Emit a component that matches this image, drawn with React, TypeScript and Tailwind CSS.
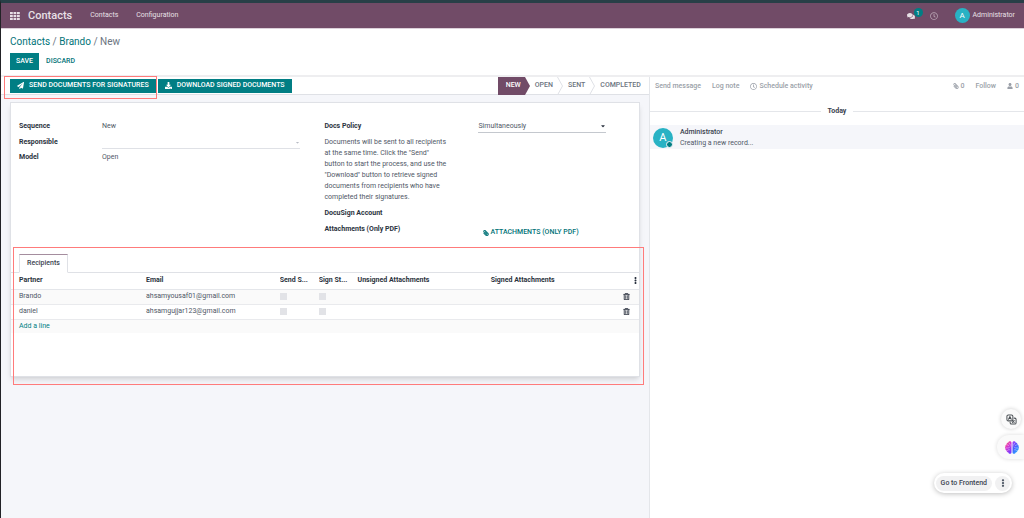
import { useState } from 'react'
import {
  FaCaretDown,
  FaComments,
  FaDownload,
  FaEllipsisV,
  FaPaperPlane,
  FaPaperclip,
  FaRegClock,
  FaRegTrashAlt,
  FaUser,
} from 'react-icons/fa'

interface Recipient {
  id: number
  partner: string
  email: string
}

const RECIPIENTS: Recipient[] = [
  { id: 1, partner: 'Brando', email: 'ahsamyousaf01@gmail.com' },
  { id: 2, partner: 'daniel', email: 'ahsamgujjar123@gmail.com' },
]

function AppsIcon() {
  return (
    <svg viewBox="0 0 10 8" className="h-2 w-[10px] fill-current" aria-hidden="true">
      {[0, 3, 6].map((y) =>
        [0, 3.5, 7].map((x) => <rect key={`${x}-${y}`} x={x} y={y} width="2.8" height="2.2" />),
      )}
    </svg>
  )
}

function TranslateIcon() {
  return (
    <svg viewBox="0 0 24 24" className="size-[11px]" fill="none" stroke="#4b5055" strokeWidth="2.2" strokeLinejoin="round" strokeLinecap="round" aria-hidden="true">
      <rect x="2" y="2" width="13" height="13" rx="3" />
      <path d="M5.5 11.5 8.5 5.5l3 6M6.6 9.8h3.8" />
      <path d="M18 9h1a3 3 0 0 1 3 3v7a3 3 0 0 1-3 3h-7a3 3 0 0 1-3-3v-1" />
      <path d="m14 18.500 4-4M14.500 14.500l3.500 4" />
    </svg>
  )
}

function BrainIcon() {
  return (
    <svg viewBox="0 0 28 26" className="h-[13px] w-[14px]" aria-hidden="true">
      <defs>
        <linearGradient id="brain-left" x1="0" y1="0" x2="0.6" y2="1">
          <stop offset="0" stopColor="#ff7a4c" />
          <stop offset="0.45" stopColor="#dc35cc" />
          <stop offset="1" stopColor="#7a3bff" />
        </linearGradient>
        <linearGradient id="brain-right" x1="0" y1="0" x2="0.6" y2="1">
          <stop offset="0" stopColor="#b03cf5" />
          <stop offset="0.5" stopColor="#4b5cff" />
          <stop offset="1" stopColor="#25a6ff" />
        </linearGradient>
      </defs>
      <path
        fill="url(#brain-left)"
        d="M13 3.500C13 1.500 11.500.5 10 .5 8.300.5 7 1.500 6.700 3 4.500 3 3 4.600 3.200 6.800 1.500 7.600.5 9.200.8 11 0 12 0 14 .8 15c-.3 1.800.7 3.400 2.400 4.200C3 21.400 4.500 23 6.700 23c.3 1.500 1.600 2.500 3.300 2.500 1.500 0 3-1 3-3z"
      />
      <path
        fill="url(#brain-right)"
        d="M15 3.500c0-2 1.500-3 3-3 1.700 0 3 1 3.300 2.500 2.200 0 3.700 1.600 3.500 3.800 1.700.8 2.700 2.400 2.400 4.200.8 1 .8 3 0 4 .3 1.800-.7 3.400-2.400 4.200.2 2.200-1.300 3.800-3.500 3.800-.3 1.500-1.600 2.500-3.300 2.500-1.500 0-3-1-3-3z"
      />
      <path
        fill="none"
        stroke="#fff"
        strokeWidth="0.8"
        strokeLinecap="round"
        d="M4 8c1.500-.5 3 0 3.500 1.500M9 5c0 1.500.8 2.500 2 3M2.500 14h5l2-2M5 19c1-1.500 2.500-2 4-1.500M24 8c-1.500-.5-3 0-3.500 1.500M19 5c0 1.500-.8 2.500-2 3M25.500 14h-5l-2-2M23 19c-1-1.500-2.500-2-4-1.500"
      />
    </svg>
  )
}

function Navbar() {
  return (
    <header className="flex h-[26px] items-center border-b border-[#dcd0d9] bg-[#714B67] px-[9px] text-[#e8e0e6]">
      <button type="button" aria-label="Apps">
        <AppsIcon />
      </button>
      <a href="#contacts" className="ml-2 text-[11px] font-medium">
        Contacts
      </a>
      <nav className="ml-[18px] flex gap-[18px]">
        <a href="#contacts">Contacts</a>
        <a href="#configuration">Configuration</a>
      </nav>
      <div className="ml-auto flex items-center">
        <button type="button" aria-label="Messages" className="relative mr-[15px]">
          <FaComments className="size-2" />
          <span className="absolute -top-1 left-[7px] flex h-[9px] w-[9px] items-center justify-center rounded-full bg-[#017e84] text-[6px] text-white">
            1
          </span>
        </button>
        <button type="button" aria-label="Activities" className="mr-[17px] opacity-60">
          <FaRegClock className="size-2" />
        </button>
        <button type="button" className="flex items-center gap-[3px]">
          <span className="flex size-[15px] items-center justify-center rounded-full bg-[#28b2c4] text-[8px] text-white">A</span>
          Administrator
        </button>
      </div>
    </header>
  )
}

function ControlPanel() {
  return (
    <div className="border-b-2 border-[#eeeef0] bg-white px-[9px] pt-[6px] pb-[5px]">
      <nav className="text-[10px] leading-[14px] text-[#6b7480]">
        <a href="#contacts" className="text-[#017378]">
          Contacts
        </a>
        {' / '}
        <a href="#brando" className="text-[#017378]">
          Brando
        </a>
        {' / New'}
      </nav>
      <div className="mt-1 flex font-medium">
        <button type="button" className="h-[17px] bg-[#017e84] px-[6px] text-white">
          SAVE
        </button>
        <button type="button" className="h-[17px] px-[7px] text-[#017378]">
          DISCARD
        </button>
      </div>
    </div>
  )
}

function StepArrow() {
  return (
    <svg viewBox="0 0 6 18" className="mr-[5px] ml-1 h-[18px] w-[6px]" fill="none" stroke="#dfe1e6" aria-hidden="true">
      <path d="m.5 0 5 9-5 9" />
    </svg>
  )
}

function StatusBar() {
  return (
    <div className="flex h-[18px] items-center border-b border-[#dfe1e6] bg-white pl-[9px] font-medium">
      <div className="relative">
        <button type="button" className="flex h-[14px] items-center gap-[5px] bg-[#017e84] px-[7px] text-white">
          <FaPaperPlane className="size-[7px]" />
          SEND DOCUMENTS FOR SIGNATURES
        </button>
        <div className="pointer-events-none absolute -top-[3px] -right-px -bottom-[6px] -left-[6px] z-10 border border-[#ff7b7b]" />
      </div>
      <button type="button" className="ml-[2px] flex h-[14px] items-center gap-[5px] bg-[#017e84] px-[7px] text-white">
        <FaDownload className="size-[7px]" />
        DOWNLOAD SIGNED DOCUMENTS
      </button>
      <div className="ml-auto flex h-[18px] items-center text-[#6b7480]">
        <span className="flex h-full items-center bg-[#714B67] pl-2 text-white">NEW</span>
        <svg viewBox="0 0 9 18" className="mr-[5px] h-[18px] w-[9px]" aria-hidden="true">
          <path d="M0 0h4l5 9-5 9H0z" fill="#714B67" />
        </svg>
        OPEN
        <StepArrow />
        SENT
        <StepArrow />
        <span className="pr-2">COMPLETED</span>
      </div>
    </div>
  )
}

function FormFields() {
  const [policy, setPolicy] = useState('Simultaneously')
  return (
    <div className="grid grid-cols-[305fr_306fr] px-2 pt-[15px]">
      <div className="grid auto-rows-min grid-cols-[83px_1fr] pr-6 leading-[11px]">
        <span className="mb-1 pt-[3px] font-bold text-[#2b3340]">Sequence</span>
        <span className="mb-1 pt-[3px]">New</span>
        <label htmlFor="responsible" className="mb-[3px] pt-[1px] font-bold text-[#2b3340]">
          Responsible
        </label>
        <div className="relative mb-[3px] border-b border-[#dfe1e6]">
          <input id="responsible" className="block h-3 w-full outline-none" />
          <FaCaretDown className="absolute top-[4px] right-0 size-[5px] text-[#b8bcc4]" />
        </div>
        <span className="font-bold text-[#2b3340]">Model</span>
        <span>Open</span>
      </div>
      <div className="grid auto-rows-min grid-cols-[126px_128px] gap-x-7 leading-[11px]">
        <label htmlFor="policy" className="pt-[3px] pb-1 font-bold text-[#2b3340]">
          Docs Policy
        </label>
        <div className="relative mb-1 border-b border-[#c4c8ce] pt-[2px]">
          <select
            id="policy"
            value={policy}
            onChange={(e) => setPolicy(e.target.value)}
            className="block h-3 w-full appearance-none outline-none"
          >
            <option>Simultaneously</option>
            <option>Sequentially</option>
          </select>
          <FaCaretDown className="pointer-events-none absolute top-[5px] right-0 size-[6px] text-[#2b3340]" />
        </div>
        <p className="col-start-1 whitespace-nowrap">
          Documents will be sent to all recipients
          <br />
          at the same time. Click the "Send"
          <br />
          button to start the process, and use the
          <br />
          "Download" button to retrieve signed
          <br />
          documents from recipients who have
          <br />
          completed their signatures.
        </p>
        <span className="col-start-1 mt-[5px] font-bold text-[#2b3340]">DocuSign Account</span>
        <span className="col-start-1 mt-[5px] font-bold whitespace-nowrap text-[#2b3340]">Attachments (Only PDF)</span>
        <button type="button" className="mt-2 flex items-center gap-px pl-[5px] font-medium whitespace-nowrap text-[#017378]">
          <FaPaperclip className="size-[6px] -scale-x-100" stroke="currentColor" strokeWidth="24" />
          ATTACHMENTS (ONLY PDF)
        </button>
      </div>
    </div>
  )
}

function RecipientsTable() {
  return (
    <table className="w-full table-fixed text-left">
      <colgroup>
        <col className="w-[21.500%]" />
        <col className="w-[21.300%]" />
        <col className="w-[6.200%]" />
        <col className="w-[6.200%]" />
        <col className="w-[21.200%]" />
        <col />
        <col className="w-[21px]" />
      </colgroup>
      <thead className="border-b border-[#e4e6ea] text-[#2b3340]">
        <tr className="h-4">
          <th className="pl-2">Partner</th>
          <th>Email</th>
          <th className="truncate">Send S...</th>
          <th className="truncate">Sign St...</th>
          <th>Unsigned Attachments</th>
          <th>Signed Attachments</th>
          <th>
            <button type="button" aria-label="Optional columns" className="flex w-full justify-end">
              <FaEllipsisV className="size-[7px]" />
            </button>
          </th>
        </tr>
      </thead>
      <tbody>
        {RECIPIENTS.map((r) => (
          <tr key={r.id} className="h-[15px] border-b border-[#e9eaed] odd:bg-[#fafafa]">
            <td className="pl-2">{r.partner}</td>
            <td>{r.email}</td>
            <td>
              <input type="checkbox" disabled aria-label="Send Status" className="block size-[7px] appearance-none bg-[#e2e3e7]" />
            </td>
            <td>
              <input type="checkbox" disabled aria-label="Sign Status" className="block size-[7px] appearance-none bg-[#e2e3e7]" />
            </td>
            <td />
            <td />
            <td>
              <button type="button" aria-label="Delete row" className="ml-[5px] block">
                <FaRegTrashAlt className="size-[7px] text-[#3b434f]" stroke="currentColor" strokeWidth="16" />
              </button>
            </td>
          </tr>
        ))}
        <tr className="h-[14px] bg-[#fafafa]">
          <td colSpan={7} className="pl-2">
            <a href="#add" className="text-[#017e84]">
              Add a line
            </a>
          </td>
        </tr>
      </tbody>
    </table>
  )
}

function Chatter() {
  return (
    <aside className="border-l border-[#e4e6ea] bg-white">
      <div className="flex h-[18px] items-center gap-[11px] px-[5px] font-medium text-[#9a9fa8]">
        <button type="button">Send message</button>
        <button type="button">Log note</button>
        <button type="button" className="flex items-center gap-[2px]">
          <FaRegClock className="size-[7px]" />
          Schedule activity
        </button>
        <button type="button" className="ml-auto flex items-center gap-[2px]">
          <FaPaperclip className="size-[6px] -scale-x-100" />0
        </button>
        <button type="button">Follow</button>
        <button type="button" className="flex items-center gap-[2px]">
          <FaUser className="size-[6px]" />0
        </button>
      </div>
      <div className="mt-[11px] flex items-center gap-[7px] leading-[11px] font-bold text-[#3b434f]">
        <hr className="flex-1 border-[#e4e6ea]" />
        Today
        <hr className="flex-1 border-[#e4e6ea]" />
      </div>
      <div className="mt-2 flex items-center gap-[7px] bg-[#f5f6fa] pt-px pl-[3px] leading-[11px]">
        <div className="relative flex size-5 items-center justify-center rounded-full bg-[#28b2c4] text-[11px] text-white">
          A
          <span className="absolute right-0 bottom-0 size-[7px] rounded-full border border-[#f5f6fa] bg-[#017e84]" />
        </div>
        <div className="pt-px">
          <div className="font-medium text-[#3b434f]">Administrator</div>
          <div>Creating a new record...</div>
        </div>
      </div>
    </aside>
  )
}

function FloatingTools() {
  return (
    <div className="fixed right-0 bottom-[25px] flex flex-col items-end">
      <button type="button" aria-label="Translate" className="mr-[3px] flex size-5 items-center justify-center rounded-full bg-[#fafafa] shadow-[0_0_4px_rgba(0,0,0,0.2)]">
        <TranslateIcon />
      </button>
      <button type="button" aria-label="Assistant" className="mt-[6px] flex h-6 w-[27px] items-center rounded-l-full bg-[#fafafa] pl-2 shadow-[0_0_4px_rgba(0,0,0,0.15)]">
        <BrainIcon />
      </button>
      <div className="mt-[14px] mr-3 flex h-5 items-center gap-[3px] rounded-full bg-white px-[2px] shadow-[0_1px_5px_rgba(0,0,0,0.25)]">
        <button type="button" className="h-[15px] rounded-full bg-[#f1f1f2] px-[5px] font-medium text-[#3b434f]">
          Go to Frontend
        </button>
        <button type="button" aria-label="More" className="flex size-[15px] items-center justify-center rounded-full bg-[#f1f1f2]">
          <FaEllipsisV className="size-2 text-[#4f5866]" />
        </button>
      </div>
    </div>
  )
}

export default function App() {
  return (
    <div className="flex min-h-screen flex-col border-t-[3px] border-l border-t-[#283f47] border-l-[#222226] bg-white font-[Roboto,sans-serif] text-[7px] leading-[11px] text-[#4f5866]">
      <Navbar />
      <ControlPanel />
      <main className="grid flex-1 grid-cols-[19fr_11fr]">
        <section className="bg-[#f5f6fa]">
          <StatusBar />
          <div className="mx-[9px] mt-[7px] flex min-h-[275px] flex-col border border-[#dfe1e6] bg-white shadow-md">
            <FormFields />
            <div className="relative mt-4 flex-1">
              <div className="flex border-b border-[#dfe1e6] pl-2">
                <button type="button" className="-mb-px h-[19px] border border-[#dfe1e6] border-t-[#a58d9e] border-b-white bg-white px-[7px] font-medium text-[#3b434f]">
                  Recipients
                </button>
              </div>
              <RecipientsTable />
              <div className="pointer-events-none absolute -top-[7px] -right-[5px] -bottom-[9px] left-[2px] border border-[#ff7b7b]" />
            </div>
          </div>
        </section>
        <Chatter />
      </main>
      <FloatingTools />
    </div>
  )
}
